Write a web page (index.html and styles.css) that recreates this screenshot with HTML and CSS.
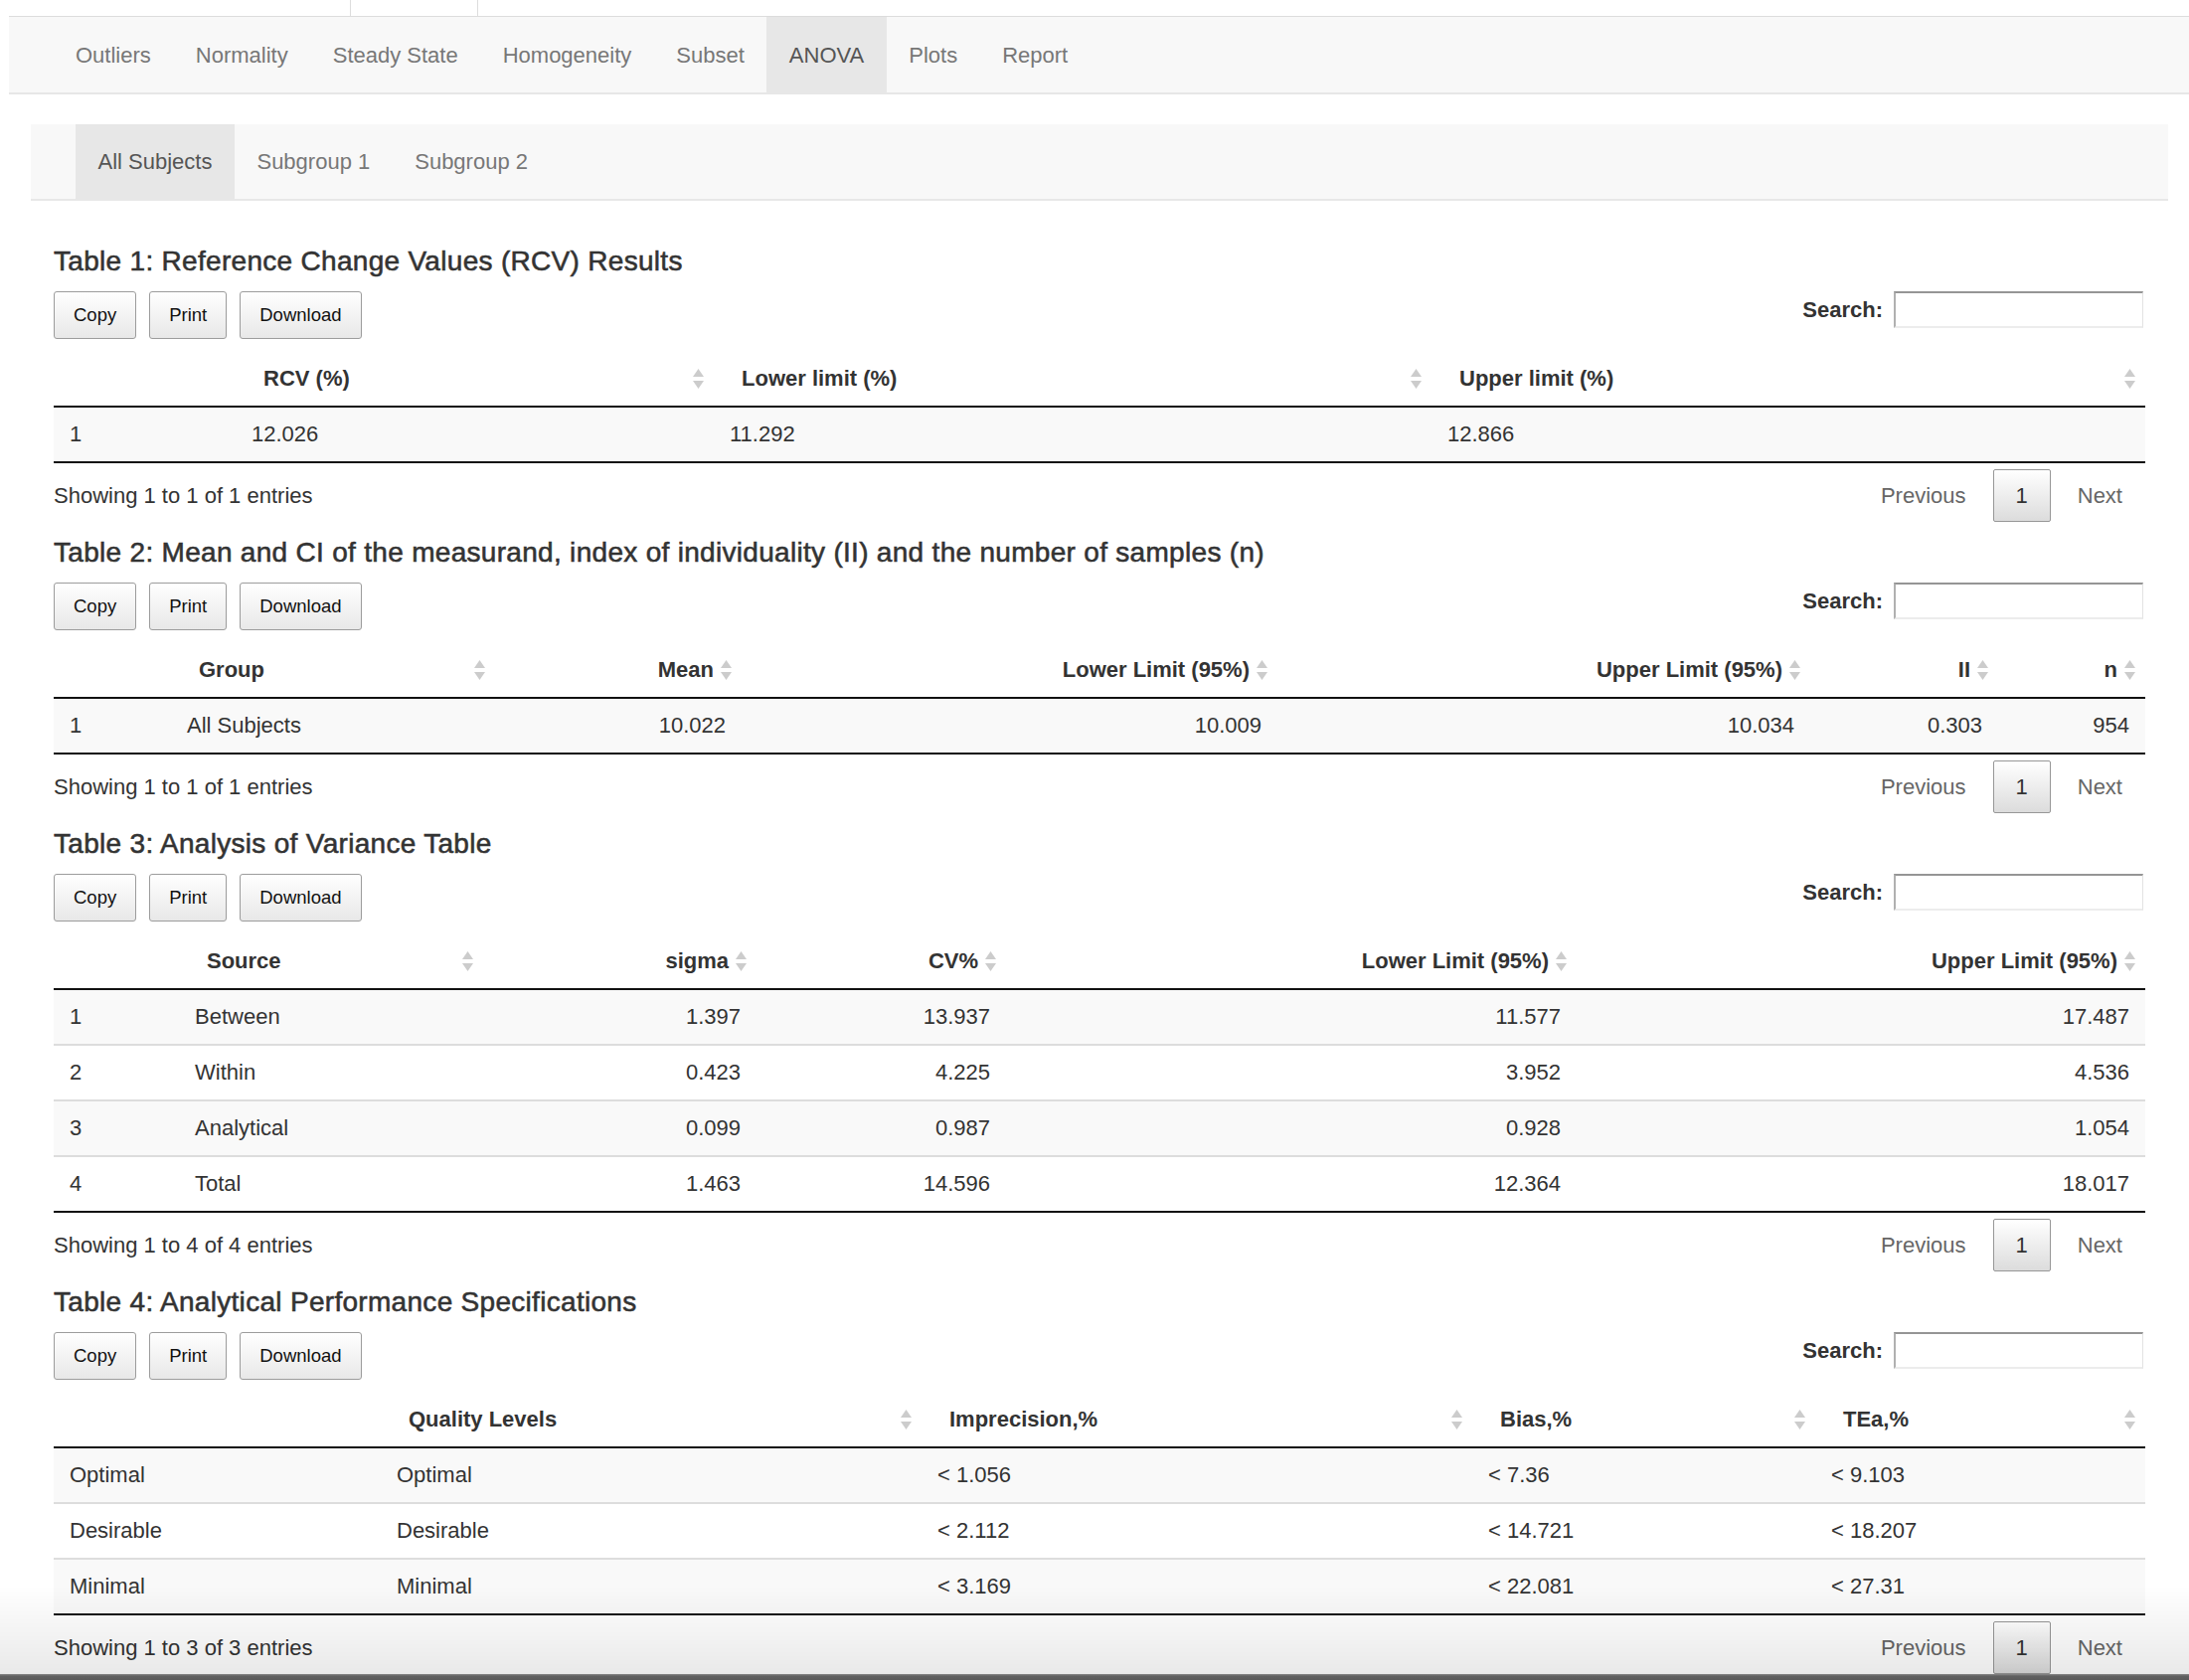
FILE: index.html
```html
<!DOCTYPE html>
<html lang="en">
<head>
<meta charset="utf-8">
<title>ANOVA</title>
<link rel="stylesheet" href="styles.css">
</head>
<body>
<div class="app">
  <div class="outer-tabs"><div class="outer-tab"></div></div>
  <nav class="mainnav">
    <ul class="navlist">
      <li class="navitem">Outliers</li>
      <li class="navitem">Normality</li>
      <li class="navitem">Steady State</li>
      <li class="navitem">Homogeneity</li>
      <li class="navitem">Subset</li>
      <li class="navitem active">ANOVA</li>
      <li class="navitem">Plots</li>
      <li class="navitem">Report</li>
    </ul>
  </nav>
  <div class="panel">
    <nav class="subnav">
      <ul class="navlist">
        <li class="navitem active">All Subjects</li>
        <li class="navitem">Subgroup 1</li>
        <li class="navitem">Subgroup 2</li>
      </ul>
    </nav>
    <div class="content">

      <section class="dt">
        <h4 class="dt-title">Table 1: Reference Change Values (RCV) Results</h4>
        <div class="dt-top">
          <div class="dt-buttons"><button class="dt-btn">Copy</button><button class="dt-btn">Print</button><button class="dt-btn">Download</button></div>
          <label class="dt-search">Search:<input class="dt-search-input" type="search"></label>
        </div>
        <table class="dt-table">
          <colgroup><col class="t1-a"><col class="t1-b"><col class="t1-c"><col class="t1-d"></colgroup>
          <thead><tr>
            <th><div class="th-in"></div></th>
            <th><div class="th-in"><span>RCV (%)</span><svg class="sort" viewBox="0 0 11 22"><path d="M0 9L5.5 1L11 9Z M0 13L11 13L5.5 21Z"/></svg></div></th>
            <th><div class="th-in"><span>Lower limit (%)</span><svg class="sort" viewBox="0 0 11 22"><path d="M0 9L5.5 1L11 9Z M0 13L11 13L5.5 21Z"/></svg></div></th>
            <th><div class="th-in"><span>Upper limit (%)</span><svg class="sort" viewBox="0 0 11 22"><path d="M0 9L5.5 1L11 9Z M0 13L11 13L5.5 21Z"/></svg></div></th>
          </tr></thead>
          <tbody>
            <tr><td>1</td><td>12.026</td><td>11.292</td><td>12.866</td></tr>
          </tbody>
        </table>
        <div class="dt-bottom">
          <div class="dt-info">Showing 1 to 1 of 1 entries</div>
          <div class="pager"><span class="pg-btn">Previous</span><span class="pg-btn current">1</span><span class="pg-btn">Next</span></div>
        </div>
      </section>

      <section class="dt">
        <h4 class="dt-title">Table 2: Mean and CI of the measurand, index of individuality (II) and the number of samples (n)</h4>
        <div class="dt-top">
          <div class="dt-buttons"><button class="dt-btn">Copy</button><button class="dt-btn">Print</button><button class="dt-btn">Download</button></div>
          <label class="dt-search">Search:<input class="dt-search-input" type="search"></label>
        </div>
        <table class="dt-table">
          <colgroup><col class="t2-a"><col class="t2-b"><col class="t2-c"><col class="t2-d"><col class="t2-e"><col class="t2-f"><col class="t2-g"></colgroup>
          <thead><tr>
            <th><div class="th-in"></div></th>
            <th><div class="th-in"><span>Group</span><svg class="sort" viewBox="0 0 11 22"><path d="M0 9L5.5 1L11 9Z M0 13L11 13L5.5 21Z"/></svg></div></th>
            <th><div class="th-in right"><span>Mean</span><svg class="sort" viewBox="0 0 11 22"><path d="M0 9L5.5 1L11 9Z M0 13L11 13L5.5 21Z"/></svg></div></th>
            <th><div class="th-in right"><span>Lower Limit (95%)</span><svg class="sort" viewBox="0 0 11 22"><path d="M0 9L5.5 1L11 9Z M0 13L11 13L5.5 21Z"/></svg></div></th>
            <th><div class="th-in right"><span>Upper Limit (95%)</span><svg class="sort" viewBox="0 0 11 22"><path d="M0 9L5.5 1L11 9Z M0 13L11 13L5.5 21Z"/></svg></div></th>
            <th><div class="th-in right"><span>II</span><svg class="sort" viewBox="0 0 11 22"><path d="M0 9L5.5 1L11 9Z M0 13L11 13L5.5 21Z"/></svg></div></th>
            <th><div class="th-in right"><span>n</span><svg class="sort" viewBox="0 0 11 22"><path d="M0 9L5.5 1L11 9Z M0 13L11 13L5.5 21Z"/></svg></div></th>
          </tr></thead>
          <tbody>
            <tr><td>1</td><td>All Subjects</td><td class="num">10.022</td><td class="num">10.009</td><td class="num">10.034</td><td class="num">0.303</td><td class="num">954</td></tr>
          </tbody>
        </table>
        <div class="dt-bottom">
          <div class="dt-info">Showing 1 to 1 of 1 entries</div>
          <div class="pager"><span class="pg-btn">Previous</span><span class="pg-btn current">1</span><span class="pg-btn">Next</span></div>
        </div>
      </section>

      <section class="dt">
        <h4 class="dt-title">Table 3: Analysis of Variance Table</h4>
        <div class="dt-top">
          <div class="dt-buttons"><button class="dt-btn">Copy</button><button class="dt-btn">Print</button><button class="dt-btn">Download</button></div>
          <label class="dt-search">Search:<input class="dt-search-input" type="search"></label>
        </div>
        <table class="dt-table">
          <colgroup><col class="t3-a"><col class="t3-b"><col class="t3-c"><col class="t3-d"><col class="t3-e"><col class="t3-f"></colgroup>
          <thead><tr>
            <th><div class="th-in"></div></th>
            <th><div class="th-in"><span>Source</span><svg class="sort" viewBox="0 0 11 22"><path d="M0 9L5.5 1L11 9Z M0 13L11 13L5.5 21Z"/></svg></div></th>
            <th><div class="th-in right"><span>sigma</span><svg class="sort" viewBox="0 0 11 22"><path d="M0 9L5.5 1L11 9Z M0 13L11 13L5.5 21Z"/></svg></div></th>
            <th><div class="th-in right"><span>CV%</span><svg class="sort" viewBox="0 0 11 22"><path d="M0 9L5.5 1L11 9Z M0 13L11 13L5.5 21Z"/></svg></div></th>
            <th><div class="th-in right"><span>Lower Limit (95%)</span><svg class="sort" viewBox="0 0 11 22"><path d="M0 9L5.5 1L11 9Z M0 13L11 13L5.5 21Z"/></svg></div></th>
            <th><div class="th-in right"><span>Upper Limit (95%)</span><svg class="sort" viewBox="0 0 11 22"><path d="M0 9L5.5 1L11 9Z M0 13L11 13L5.5 21Z"/></svg></div></th>
          </tr></thead>
          <tbody>
            <tr><td>1</td><td>Between</td><td class="num">1.397</td><td class="num">13.937</td><td class="num">11.577</td><td class="num">17.487</td></tr>
            <tr><td>2</td><td>Within</td><td class="num">0.423</td><td class="num">4.225</td><td class="num">3.952</td><td class="num">4.536</td></tr>
            <tr><td>3</td><td>Analytical</td><td class="num">0.099</td><td class="num">0.987</td><td class="num">0.928</td><td class="num">1.054</td></tr>
            <tr><td>4</td><td>Total</td><td class="num">1.463</td><td class="num">14.596</td><td class="num">12.364</td><td class="num">18.017</td></tr>
          </tbody>
        </table>
        <div class="dt-bottom">
          <div class="dt-info">Showing 1 to 4 of 4 entries</div>
          <div class="pager"><span class="pg-btn">Previous</span><span class="pg-btn current">1</span><span class="pg-btn">Next</span></div>
        </div>
      </section>

      <section class="dt">
        <h4 class="dt-title">Table 4: Analytical Performance Specifications</h4>
        <div class="dt-top">
          <div class="dt-buttons"><button class="dt-btn">Copy</button><button class="dt-btn">Print</button><button class="dt-btn">Download</button></div>
          <label class="dt-search">Search:<input class="dt-search-input" type="search"></label>
        </div>
        <table class="dt-table">
          <colgroup><col class="t4-a"><col class="t4-b"><col class="t4-c"><col class="t4-d"><col class="t4-e"></colgroup>
          <thead><tr>
            <th><div class="th-in"></div></th>
            <th><div class="th-in"><span>Quality Levels</span><svg class="sort" viewBox="0 0 11 22"><path d="M0 9L5.5 1L11 9Z M0 13L11 13L5.5 21Z"/></svg></div></th>
            <th><div class="th-in"><span>Imprecision,%</span><svg class="sort" viewBox="0 0 11 22"><path d="M0 9L5.5 1L11 9Z M0 13L11 13L5.5 21Z"/></svg></div></th>
            <th><div class="th-in"><span>Bias,%</span><svg class="sort" viewBox="0 0 11 22"><path d="M0 9L5.5 1L11 9Z M0 13L11 13L5.5 21Z"/></svg></div></th>
            <th><div class="th-in"><span>TEa,%</span><svg class="sort" viewBox="0 0 11 22"><path d="M0 9L5.5 1L11 9Z M0 13L11 13L5.5 21Z"/></svg></div></th>
          </tr></thead>
          <tbody>
            <tr><td>Optimal</td><td>Optimal</td><td>&lt; 1.056</td><td>&lt; 7.36</td><td>&lt; 9.103</td></tr>
            <tr><td>Desirable</td><td>Desirable</td><td>&lt; 2.112</td><td>&lt; 14.721</td><td>&lt; 18.207</td></tr>
            <tr><td>Minimal</td><td>Minimal</td><td>&lt; 3.169</td><td>&lt; 22.081</td><td>&lt; 27.31</td></tr>
          </tbody>
        </table>
        <div class="dt-bottom">
          <div class="dt-info">Showing 1 to 3 of 3 entries</div>
          <div class="pager"><span class="pg-btn">Previous</span><span class="pg-btn current">1</span><span class="pg-btn">Next</span></div>
        </div>
      </section>

    </div>
  </div>
</div>
<div class="viewport-fade"></div>
</body>
</html>
```

FILE: styles.css
```css
html, body {
  margin: 0;
  padding: 0;
  overflow: hidden;
  background: #fff;
}

body {
  font-family: "Liberation Sans", Arial, Helvetica, sans-serif;
  font-size: 22px;
  line-height: 31px;
  color: #333;
}

.app {
  margin-left: 9px;
}

/* top outer tabset remnant */
.outer-tabs {
  height: 16px;
  border-bottom: 1px solid #dcdcdc;
  padding-left: 343px;
}

.outer-tab {
  width: 127px;
  height: 16px;
  border-left: 1px solid #dddddd;
  border-right: 1px solid #dddddd;
  background: #fff;
}

/* navbars */
.mainnav {
  background: #f8f8f8;
  border-bottom: 2px solid #e7e7e7;
  padding-left: 44.5px;
}

.navlist {
  list-style: none;
  margin: 0;
  padding: 0;
  display: flex;
}

.navitem {
  padding: 22.5px 22.5px;
  color: #777;
  white-space: nowrap;
}

.navitem.active {
  background: #e7e7e7;
  color: #555;
}

.panel {
  margin: 30px 21px 0 22px;
}

.subnav {
  background: #f8f8f8;
  border-bottom: 2px solid #e7e7e7;
  padding-left: 45px;
}

.subnav .navitem {
  padding: 22px 22.5px;
}

.content {
  padding: 45px 23px 0;
}

/* datatable sections */
.dt {
  margin-bottom: 15px;
}

.dt:last-child {
  margin-bottom: 0;
}

.dt-title {
  margin: 0 0 15px;
  font-size: 28px;
  line-height: 31px;
  font-weight: normal;
  letter-spacing: 0.3px;
  color: #333;
  -webkit-text-stroke: 0.55px #333;
  white-space: nowrap;
}

.dt-top {
  display: flex;
  justify-content: space-between;
  align-items: flex-start;
  margin-bottom: 12px;
}

.dt-buttons {
  display: flex;
  gap: 13px;
}

.dt-btn {
  display: inline-flex;
  align-items: center;
  height: 48px;
  box-sizing: border-box;
  padding: 0 19px;
  margin: 0;
  border: 1px solid #9c9c9c;
  border-radius: 3px;
  background: linear-gradient(to bottom, #ffffff 0%, #e8e8e8 100%);
  font-family: "Liberation Sans", Arial, Helvetica, sans-serif;
  font-size: 18.5px;
  color: #111;
}

.dt-search {
  display: flex;
  align-items: center;
  font-weight: bold;
  margin-right: 2px;
}

.dt-search-input {
  width: 251px;
  height: 37px;
  box-sizing: border-box;
  margin: 0 0 0 11px;
  padding: 0 4px;
  border-style: solid;
  border-width: 2px 1px 2px 2px;
  border-color: #959595 #e2e2e2 #ececec #b0b0b0;
  background: #fff;
  font-size: 18px;
  outline: none;
}

/* table */
.dt-table {
  width: 100%;
  table-layout: fixed;
  border-collapse: separate;
  border-spacing: 0;
}

.t1-a { width: 183px; }
.t1-b { width: 481px; }
.t1-c { width: 722px; }
.t1-d { width: 718px; }

.t2-a { width: 118px; }
.t2-b { width: 326px; }
.t2-c { width: 248px; }
.t2-d { width: 539px; }
.t2-e { width: 536px; }
.t2-f { width: 189px; }
.t2-g { width: 148px; }

.t3-a { width: 126px; }
.t3-b { width: 306px; }
.t3-c { width: 275px; }
.t3-d { width: 251px; }
.t3-e { width: 574px; }
.t3-f { width: 572px; }

.t4-a { width: 329px; }
.t4-b { width: 544px; }
.t4-c { width: 554px; }
.t4-d { width: 345px; }
.t4-e { width: 332px; }

.dt-table th {
  padding: 12px 0 12px 28px;
  text-align: left;
  font-weight: bold;
  color: #333;
  border-bottom: 2px solid #111;
  vertical-align: middle;
}

.th-in {
  display: flex;
  align-items: center;
  height: 31px;
  white-space: nowrap;
}

.th-in.right {
  justify-content: flex-end;
}

.sort {
  flex: none;
  width: 11px;
  height: 22px;
  margin-left: auto;
  margin-right: 10px;
  fill: #cccccc;
}

.th-in.right .sort {
  margin-left: 7px;
}

.dt-table td {
  padding: 11px 16px 12px;
  white-space: nowrap;
  color: #333;
}

.dt-table tbody tr:nth-child(odd) td {
  background: #f9f9f9;
}

.dt-table tbody tr + tr td {
  border-top: 2px solid #dddddd;
}

.dt-table tbody tr:last-child td {
  border-bottom: 2px solid #111;
}

.dt-table td.num {
  text-align: right;
}

/* bottom of table */
.dt-bottom {
  display: flex;
  justify-content: space-between;
  align-items: center;
  padding-top: 6px;
}

.pager {
  display: flex;
}

.pg-btn {
  padding: 11px 22px;
  line-height: 29px;
  border: 1px solid transparent;
  border-radius: 2px;
  color: #666;
  margin-left: 4px;
}

.pg-btn.current {
  border-color: #979797;
  background: linear-gradient(to bottom, #ffffff 0%, #dcdcdc 100%);
  color: #333;
}

/* window bottom fade */
.viewport-fade {
  position: fixed;
  left: 0;
  right: 0;
  bottom: 0;
  height: 95px;
  pointer-events: none;
  background: linear-gradient(to bottom,
    rgba(0, 0, 0, 0) 0px,
    rgba(0, 0, 0, 0.085) 89px,
    #8a8a8a 89px,
    #616161 91px,
    #5a5a5a 95px);
}
```
